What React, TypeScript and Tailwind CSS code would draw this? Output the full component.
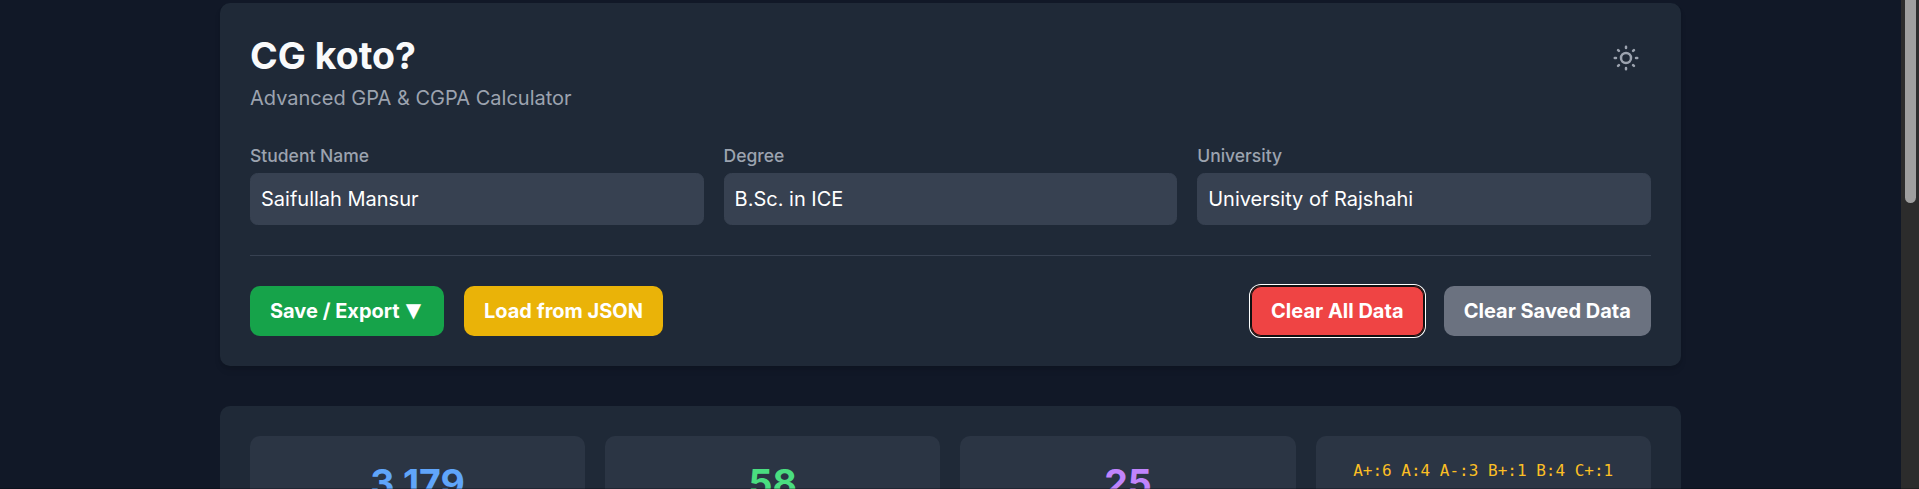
const profile = [
  { label: "Student Name", value: "Saifullah Mansur" },
  { label: "Degree", value: "B.Sc. in ICE" },
  { label: "University", value: "University of Rajshahi" },
];

const stats = [
  { value: "3.179", color: "text-[#60a5fa]" },
  { value: "58", color: "text-[#4ade80]" },
  { value: "25", color: "text-[#c084fc]" },
];

const button =
  "h-[50px] rounded-[10px] text-center text-[20px] leading-[30px] font-bold text-white whitespace-nowrap";

function SunIcon() {
  return (
    <svg className="size-[30px]" viewBox="0 0 24 24" fill="none" stroke="currentColor" strokeWidth="2" strokeLinecap="round" strokeLinejoin="round">
      <path d="M12 3v1m0 16v1m9-9h-1M4 12H3m15.364 6.364l-.707-.707M6.343 6.343l-.707-.707m12.728 0l-.707.707M6.343 17.657l-.707.707M16 12a4 4 0 11-8 0 4 4 0 018 0z" />
    </svg>
  );
}

function Header() {
  return (
    <header className="rounded-[10px] bg-[#1f2937] p-[30px] shadow-[0_5px_7.5px_-1px_rgba(0,0,0,0.1),0_2.5px_5px_-2.5px_rgba(0,0,0,0.1)]">
      <div className="flex items-start justify-between">
        <div>
          <h1 className="text-[37.5px] leading-[45px] font-bold text-[#f9fafb]">CG koto?</h1>
          <p className="mt-[5px] text-[20px] leading-[30px] text-[#9ca3af]">Advanced GPA &amp; CGPA Calculator</p>
        </div>
        <button className="p-2.5 text-[#9ca3af]" aria-label="Toggle theme">
          <SunIcon />
        </button>
      </div>
      <div className="mt-[30px] grid grid-cols-3 gap-5">
        {profile.map((f) => (
          <label key={f.label} className="block">
            <span className="block text-[17.5px] leading-[25px] font-medium text-[#9ca3af]">{f.label}</span>
            <input
              className="mt-[5px] block h-[52px] w-full rounded-[7.5px] border border-[#374151] bg-[#374151] px-2.5 text-[20px] leading-[30px] text-white"
              defaultValue={f.value}
            />
          </label>
        ))}
      </div>
      <div className="mt-[30px] flex items-center justify-between border-t border-[#374151] pt-[30px]">
        <div className="flex gap-5">
          <button className={`${button} flex w-[194px] items-center gap-[6px] bg-[#16a34a] pl-5`}>
            <span>Save / Export</span>
            <span className="w-[15px] pb-[2px] font-['DejaVu_Sans',sans-serif] text-[20px]">▼</span>
          </button>
          <button className={`${button} w-[199px] bg-[#eab308]`}>Load from JSON</button>
        </div>
        <div className="flex gap-5">
          <button className={`${button} w-[173px] bg-[#ef4444] shadow-[inset_0_0_0_1px_#101010,0_0_0_1px_#101010,0_0_0_2px_#ffffff]`}>
            Clear All Data
          </button>
          <button className={`${button} w-[207px] bg-[#6b7280]`}>Clear Saved Data</button>
        </div>
      </div>
    </header>
  );
}

function Summary() {
  return (
    <section className="mt-10 grid h-[200px] grid-cols-4 gap-5 rounded-[10px] bg-[#1f2937] p-[30px]">
      {stats.map((s) => (
        <div key={s.value} className="rounded-[10px] bg-[#2b3544] pt-6 text-center">
          <p className={`text-[37.5px] leading-[45px] font-bold ${s.color}`}>{s.value}</p>
        </div>
      ))}
      <div className="rounded-[10px] bg-[#2b3544] pt-5 text-center">
        <p className="font-['DejaVu_Sans_Mono',monospace] text-[16px] leading-[29px] text-[#fbbf24]">
          A+:6 A:4 A-:3 B+:1 B:4 C+:1
        </p>
      </div>
    </section>
  );
}

export default function App() {
  return (
    <div className="relative flex h-[489px] overflow-hidden bg-[#111827] font-[Inter,sans-serif]">
      <main className="flex-1">
        <div className="ml-[220px] w-[1460.8px] pt-[3px]">
          <Header />
          <Summary />
        </div>
      </main>
      <div className="w-[18px] bg-[#2c2c2c] pl-1">
        <div className="h-[203px] w-[11px] rounded-b-full bg-[#9f9f9f]" />
      </div>
      <div className="absolute inset-x-0 bottom-0 h-px bg-black/25" />
    </div>
  );
}
